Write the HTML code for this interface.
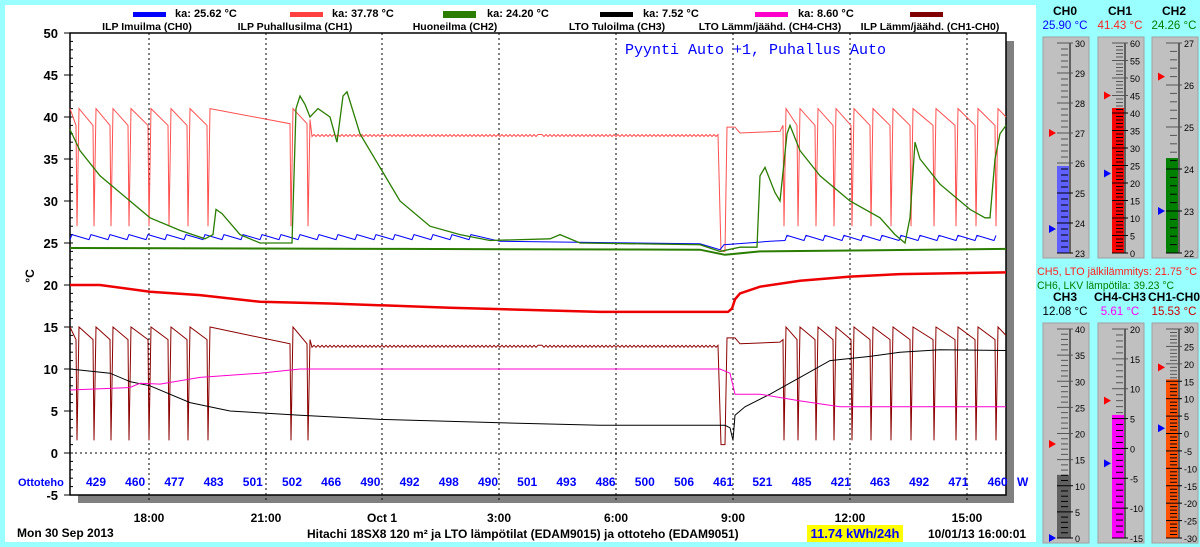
<!DOCTYPE html>
<html><head><meta charset="utf-8">
<style>
html,body{margin:0;padding:0;background:#99ffff;width:1200px;height:547px;overflow:hidden}
svg{display:block;font-family:"Liberation Sans",Arial,sans-serif}
</style></head>
<body>
<svg id="s" width="1200" height="547" xmlns="http://www.w3.org/2000/svg">
<rect x="0" y="0" width="1200" height="547" fill="#99ffff"/>
<rect x="5" y="5" width="1031" height="537" fill="#ffffff"/>
<rect x="1006" y="41" width="8" height="462" fill="#808080"/>
<rect x="78" y="495" width="936" height="8" fill="#808080"/>
<rect x="70" y="33" width="936" height="462" fill="#fff" stroke="#000" stroke-width="1.5"/>
<g id="grid"></g>
<g id="traces"></g>
<g font-weight="bold" font-size="11" fill="#000">
<rect x="133" y="12" width="33" height="5" fill="#0000ff"/><text x="175" y="17">ka: 25.62 °C</text>
<rect x="290" y="12" width="33" height="5" fill="#ff4040"/><text x="332" y="17">ka: 37.78 °C</text>
<rect x="443" y="11" width="33" height="7" fill="#2a7d00"/><text x="487" y="17">ka: 24.20 °C</text>
<rect x="600" y="12" width="33" height="5" fill="#000"/><text x="643" y="17">ka: 7.52 °C</text>
<rect x="755" y="12" width="33" height="5" fill="#ff00cc"/><text x="798" y="17">ka: 8.60 °C</text>
<rect x="910" y="12" width="33" height="5" fill="#800000"/>
<g text-anchor="middle" font-size="10.5">
<text x="147" y="30">ILP Imuilma (CH0)</text>
<text x="295" y="30">ILP Puhallusilma (CH1)</text>
<text x="455" y="30">Huoneilma (CH2)</text>
<text x="617" y="30">LTO Tuloilma (CH3)</text>
<text x="770" y="30">LTO Lämm/jäähd. (CH4-CH3)</text>
<text x="930" y="30">ILP Lämm/jäähd. (CH1-CH0)</text>
</g>
<g id="ylab" text-anchor="end" font-size="13"></g>
<text x="30" y="280" font-size="12" transform="rotate(-90 30 276)" text-anchor="middle">°C</text>
<text x="18" y="486" font-size="11" fill="#0000ff">Ottoteho</text>
<g id="otto" text-anchor="middle" font-size="12" fill="#0000ff"></g>
<text x="1017" y="486" font-size="12" fill="#0000ff">W</text>
<g text-anchor="middle" font-size="12">
<text x="149" y="522">18:00</text><text x="266" y="522">21:00</text><text x="382" y="522">Oct 1</text>
<text x="499" y="522">3:00</text><text x="616" y="522">6:00</text><text x="733" y="522">9:00</text>
<text x="850" y="522">12:00</text><text x="967" y="522">15:00</text>
</g>
<text x="17" y="537" font-size="12">Mon 30 Sep 2013</text>
<text x="307" y="538" font-size="12">Hitachi 18SX8 120 m² ja LTO lämpötilat (EDAM9015) ja ottoteho (EDAM9051)</text>
<rect x="807" y="525" width="96" height="17" fill="#ffff00"/>
<text x="855" y="538" font-size="13" fill="#0000ff" text-anchor="middle">11.74 kWh/24h</text>
<text x="928" y="538" font-size="12">10/01/13 16:00:01</text>
</g>
<text x="625" y="54" font-family="Liberation Mono,monospace" font-size="15" fill="#0000ff">Pyynti Auto +1, Puhallus Auto</text>
<g id="therm" font-size="11"></g>
<text x="1037" y="275" fill="#ff2020" font-size="11" textLength="160" lengthAdjust="spacingAndGlyphs">CH5, LTO jälkilämmitys: 21.75 °C</text>
<text x="1037" y="289" fill="#008000" font-size="11" textLength="137" lengthAdjust="spacingAndGlyphs">CH6, LKV lämpötila: 39.23 °C</text>
</svg>
<script>
var NS="http://www.w3.org/2000/svg";
function el(p,t,a,txt){var e=document.createElementNS(NS,t);for(var k in a)e.setAttribute(k,a[k]);if(txt!=null)e.textContent=txt;document.getElementById(p).appendChild(e);return e;}
function Y(v){return 453-8.4*v;}
[149,266,382,499,616,733,850,967].forEach(function(x){el("grid","line",{x1:x,y1:33,x2:x,y2:503,stroke:"#000","stroke-dasharray":"2,3","stroke-width":1});});
el("grid","line",{x1:70,y1:453,x2:1006,y2:453,stroke:"#000","stroke-dasharray":"2,3"});
for(var v=-5;v<=50;v+=5){el("grid","line",{x1:64,y1:Y(v),x2:70,y2:Y(v),stroke:"#000"});el("ylab","text",{x:58,y:Y(v)+5},String(v));}
for(var v=-5;v<=50;v+=1){el("grid","line",{x1:70,y1:Y(v),x2:73,y2:Y(v),stroke:"#000"});}
var ot=[429,460,477,483,501,502,466,490,492,498,490,501,493,486,500,506,461,521,485,421,463,492,471,460];
ot.forEach(function(n,i){el("otto","text",{x:96+39.2*i,y:486},String(n));});
function P(pts){return "M"+pts.map(function(p){return p[0].toFixed(1)+","+Y(p[1]).toFixed(1);}).join("L");}
function path(pts,c,w){el("traces","path",{d:P(pts),fill:"none",stroke:c,"stroke-width":w||1});}
var s1=[76,93,110,128,148,168,187,207],s2=[783,797,815,833,851,870,890,910,933,955,975,995];
function build(hi,lo,bot,f1,f2,dip){var p=[[70,hi]];
 s1.forEach(function(s){p.push([s,lo]);p.push([s+1,bot]);p.push([s+3,hi]);});
 p.push([290,f1]);p.push([291,bot]);p.push([293,hi]);p.push([307,f1]);p.push([308,bot]);p.push([310,f1+0.5]);
 for(var x=312;x<720;x+=2){p.push([x,f2+((x%4)?0.12:-0.12)]);}
 p.push([540,f2]);
 p.sort(function(a,b){return a[0]-b[0];});
 p.push([721,dip]);p.push([725,dip]);p.push([727,f2+1]);p.push([735,f2+1]);p.push([740,f2+0.3]);p.push([780,f2+0.5]);
 s2.forEach(function(s){p.push([s,lo]);p.push([s+1,bot]);p.push([s+3,hi]);});p.push([1006,hi-1]);return p;}
var r1=build(41,39,27,39.2,37.8,24);
r1=r1.filter(function(p){return !(p[0]==540);});
path(r1,"#ff5050",1);
var r2=build(15,13.5,1.5,13,12.7,1).filter(function(p){return !(p[0]==540);});
path(r2,"#8b0000",1);
var bl=[];for(var x=70;x<470;x+=19){bl.push([x,25.4]);bl.push([x+2,26]);}
bl.push([500,25.2]);bl.push([700,24.9]);bl.push([720,24.2]);bl.push([724,24.8]);bl.push([770,25.2]);
for(var x=785;x<1006;x+=19){bl.push([x,25.3]);bl.push([x+2,25.9]);}
path(bl,"#0000ff",1);
path([[70,24.4],[400,24.3],[700,24.2],[725,23.6],[760,24],[1006,24.3]],"#2a7d00",2);
path([[70,38.5],[80,36],[100,33],[130,30],[150,28],[180,26.5],[205,25.5],[213,26],[216,29],[222,28.5],[240,26],[260,25],[292,25],[296,41],[300,42.5],[305,41.5],[310,40],[318,41],[330,40],[337,37],[343,42.5],[347,43],[360,38],[380,34],[400,30],[430,27],[460,26],[490,25.3],[550,25.5],[560,26],[580,25],[700,24.8],[720,24],[740,24.5],[757,24.5],[760,33],[765,34],[775,31],[780,30],[787,38],[790,39],[800,36],[820,33],[850,30],[880,28],[895,26],[905,25],[910,28],[915,37],[920,35],[940,32],[970,29],[985,28],[990,28],[995,35],[1000,38],[1006,39]],"#2a7d00",1.3);
path([[70,10],[110,9.5],[130,8.5],[150,8],[190,6],[230,5],[300,4.5],[380,4],[500,3.6],[600,3.3],[725,3.3],[730,3],[733,1.5],[735,4.5],[745,5.5],[770,7],[800,9],[830,11],[870,11.5],[900,12],[940,12.3],[1006,12.2]],"#000",1);
path([[70,7.5],[130,7.8],[140,8.3],[160,8.2],[200,9],[260,9.5],[300,10],[720,10],[730,9.5],[735,7],[760,7],[800,6.2],[840,5.5],[1006,5.5]],"#ff00cc",1);
path([[70,20],[100,20],[150,19.2],[200,18.8],[260,18],[330,17.8],[450,17.3],[600,16.8],[728,16.8],[732,17.2],[735,18.3],[740,19],[760,19.8],[800,20.5],[850,21],[900,21.3],[1006,21.5]],"#ee0000",2.5);
function therm(bx,top,bot,name,val,vcol,min,max,step,fill,fc,red,blue){
 var g="therm";
 el(g,"text",{x:bx+22,y:top-22,"text-anchor":"middle","font-weight":"bold","font-size":12},name);
 el(g,"text",{x:bx+22,y:top-8,"text-anchor":"middle",fill:vcol,"font-size":11.5},val);
 el(g,"rect",{x:bx,y:top,width:46,height:bot-top,fill:"#c0c0c0",stroke:"#a0a0a0"});
 var sy=top+6,ey=bot-5,lx=bx+27;
 function yy(v){return ey-(v-min)/(max-min)*(ey-sy);}
 el(g,"rect",{x:bx+14,y:yy(fill),width:12,height:ey-yy(fill),fill:fc});
 el(g,"line",{x1:lx,y1:sy,x2:lx,y2:ey,stroke:"#000"});
 var n=(max-min)/step*5;
 for(var i=0;i<=n;i++){var v=min+i*step/5,y=yy(v),maj=i%5==0;
  el(g,"line",{x1:maj?bx+14:bx+18,y1:y,x2:maj?lx+3:lx-2,y2:y,stroke:v<=fill?"#000":"#555","stroke-width":1});
  if(maj)el(g,"text",{x:lx+5,y:y+4,"font-size":9},String(v));}
 var yr=yy(red),yb=yy(blue);
 el(g,"path",{d:"M"+(bx+6)+","+(yr-4)+"L"+(bx+13)+","+yr+"L"+(bx+6)+","+(yr+4)+"Z",fill:"#ff0000"});
 el(g,"path",{d:"M"+(bx+6)+","+(yb-4)+"L"+(bx+13)+","+yb+"L"+(bx+6)+","+(yb+4)+"Z",fill:"#0000ff"});
}
therm(1043,37,258,"CH0","25.90 °C","#0000ff",23,30,1,25.9,"#6060ff",27,23.8);
therm(1098,37,258,"CH1","41.43 °C","#ff2020",0,60,5,41.43,"#ff0000",45,22.7);
therm(1152,37,258,"CH2","24.26 °C","#008000",22,27,1,24.26,"#008000",26.2,23);
therm(1043,323,543,"CH3","12.08 °C","#000",0,40,5,12.08,"#606060",18,0);
therm(1098,323,543,"CH4-CH3","5.61 °C","#ff00ff",-15,20,5,5.61,"#ff00ff",8,-2.5);
therm(1152,323,543,"CH1-CH0","15.53 °C","#cc0000",-30,30,5,15.53,"#ff5000",19,1.5);
</script>
</body></html>
